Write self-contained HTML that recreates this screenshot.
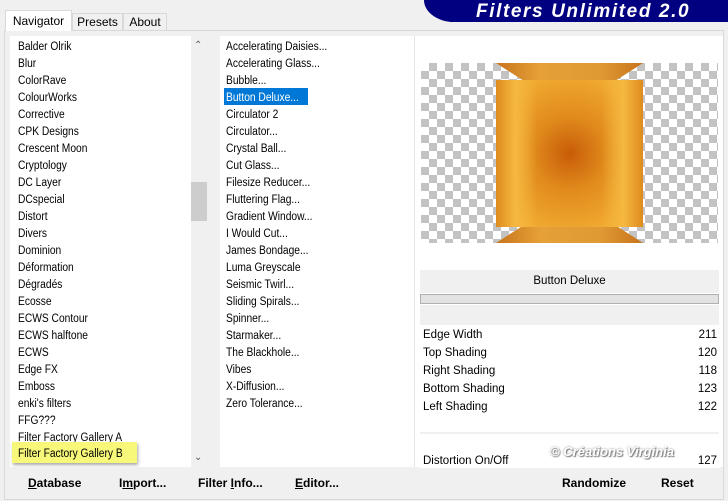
<!DOCTYPE html>
<html><head><style>
*{margin:0;padding:0;box-sizing:border-box}
body{width:728px;height:501px;background:#f0f0f0;font-family:"Liberation Sans",sans-serif;font-size:11.5px;color:#000;position:relative;overflow:hidden}
.a{position:absolute}
.row{position:absolute;height:17px;line-height:17px;white-space:nowrap;transform:scaleX(0.89);transform-origin:0 0}
.tab{position:absolute;border:1px solid #d9d9d9;border-bottom:none;background:#f0f0f0;font-size:12px;text-align:center}
.btn{position:absolute;font-weight:bold;font-size:12px}
.ck{background-color:#fff;background-image:linear-gradient(45deg,#c3c3c3 25%,transparent 25%,transparent 75%,#c3c3c3 75%),linear-gradient(45deg,#c3c3c3 25%,transparent 25%,transparent 75%,#c3c3c3 75%);background-size:16px 16px;background-position:0 0,8px 8px}
.sl{position:absolute;left:420px;width:299px;height:17px;background:#fff;line-height:17px;padding-left:3px}
.sl span{position:absolute;right:2px}
</style></head><body>
<div class="a" style="left:424px;top:0;width:304px;height:22px;background:#000080;border-bottom-left-radius:30px 22px"></div>
<div class="a" style="left:476px;top:0;height:22px;color:#fff;font-weight:bold;font-style:italic;font-size:19px;line-height:23px;letter-spacing:1.6px;white-space:nowrap">Filters Unlimited 2.0</div>
<div class="a" style="left:4px;top:30px;width:720px;height:470px;border:1px solid #d9d9d9;background:#f0f0f0"></div>
<div class="tab" style="left:5px;top:10px;width:67px;height:21px;background:#fff;line-height:20px">Navigator</div>
<div class="tab" style="left:72px;top:13px;width:51px;height:17px;line-height:16px">Presets</div>
<div class="tab" style="left:123px;top:13px;width:44px;height:17px;line-height:16px">About</div>
<div class="a" style="left:10px;top:36px;width:181px;height:431px;background:#fff"></div>
<div class="a" style="left:191px;top:36px;width:16px;height:431px;background:#f0f0f0"></div>
<div class="a" style="left:191px;top:182px;width:16px;height:39px;background:#cdcdcd"></div>
<div class="a" style="left:194px;top:40px;font-size:10px;color:#606060">&#8963;</div>
<div class="a" style="left:194px;top:452px;font-size:10px;color:#606060">&#8964;</div>
<div class="a" style="left:220px;top:36px;width:194px;height:431px;background:#fff"></div>
<div class="a" style="left:414px;top:36px;width:309px;height:431px;background:#fff;border-left:1px solid #e5e5e5"></div>
<div id="L"></div>
<div class="a" style="left:12px;top:442px;width:125px;height:21px;background:#f7f77a;box-shadow:1px 2px 3px rgba(0,0,0,.35)"></div>
<div class="row" style="left:18px;top:446px">Filter Factory Gallery B</div>
<div class="a" style="left:224px;top:88px;width:84px;height:17px;background:#0078d7"></div>
<div id="M"></div>
<div class="a ck" style="left:421px;top:63px;width:297px;height:180px"></div>
<div class="a" style="left:496px;top:63px;width:147px;height:17px;background:linear-gradient(90deg,#c8741c,#e6a038 30%,#e09a34 70%,#c8741c);clip-path:polygon(0 0,100% 0,82% 100%,18% 100%)"></div>
<div class="a" style="left:496px;top:226px;width:147px;height:17px;background:linear-gradient(90deg,#c8741c,#e6a038 30%,#e09a34 70%,#c8741c);clip-path:polygon(18% 0,82% 0,100% 100%,0 100%)"></div>
<div class="a" style="left:496px;top:80px;width:147px;height:147px;background:radial-gradient(ellipse at center,#c85c08 0%,#e08a1c 35%,#f0a830 75%,#f5b840 100%)"></div>
<div class="a" style="left:496px;top:80px;width:147px;height:147px;background:linear-gradient(90deg,#de8a1e,#f5b840 13%,transparent 28%,transparent 72%,#f5b840 87%,#de8a1e)"></div>
<div class="a" style="left:420px;top:270px;width:299px;height:23px;background:#f0f0f0;text-align:center;line-height:23px">Button Deluxe</div>
<div class="a" style="left:420px;top:294px;width:299px;height:10px;background:#e2e2e2;border:1px solid #b0b0b0"></div>
<div class="a" style="left:420px;top:305px;width:299px;height:20px;background:#f0f0f0"></div>
<div class="sl" style="top:325px;line-height:20px">Edge Width<span>211</span></div>
<div class="sl" style="top:343px;line-height:20px">Top Shading<span>120</span></div>
<div class="sl" style="top:361px;line-height:20px">Right Shading<span>118</span></div>
<div class="sl" style="top:379px;line-height:20px">Bottom Shading<span>123</span></div>
<div class="sl" style="top:397px;line-height:20px">Left Shading<span>122</span></div>
<div class="a" style="left:420px;top:432px;width:299px;height:2px;background:#f0f0f0"></div>
<div class="sl" style="top:451px;line-height:20px">Distortion On/Off<span>127</span></div>
<div class="a" style="left:550px;top:444px;font-weight:bold;font-style:italic;font-size:13px;color:#fff;text-shadow:0 0 2px #888,1px 1px 1px #777">© Créations Virginia</div>
<div class="a" style="left:420px;top:468px;width:299px;height:29px;background:#f0f0f0"></div>
<div class="btn" style="left:562px;top:476px">Randomize</div>
<div class="btn" style="left:661px;top:476px">Reset</div>
<div class="a" style="left:10px;top:467px;width:404px;height:30px;background:#f0f0f0"></div>
<div class="btn" style="left:28px;top:476px"><u>D</u>atabase</div>
<div class="btn" style="left:119px;top:476px">I<u>m</u>port...</div>
<div class="btn" style="left:198px;top:476px">Filter <u>I</u>nfo...</div>
<div class="btn" style="left:295px;top:476px"><u>E</u>ditor...</div>
<script>
var L=["Balder Olrik","Blur","ColorRave","ColourWorks","Corrective","CPK Designs","Crescent Moon","Cryptology","DC Layer","DCspecial","Distort","Divers","Dominion","Déformation","Dégradés","Ecosse","ECWS Contour","ECWS halftone","ECWS","Edge FX","Emboss","enki's filters","FFG???","Filter Factory Gallery A"];
var M=["Accelerating Daisies...","Accelerating Glass...","Bubble...","Button Deluxe...","Circulator 2","Circulator...","Crystal Ball...","Cut Glass...","Filesize Reducer...","Fluttering Flag...","Gradient Window...","I Would Cut...","James Bondage...","Luma Greyscale","Seismic Twirl...","Sliding Spirals...","Spinner...","Starmaker...","The Blackhole...","Vibes","X-Diffusion...","Zero Tolerance..."];
var h="";L.forEach(function(t,i){h+='<div class="row" style="left:18px;top:'+(39+i*17)+'px">'+t+'</div>'});
document.getElementById("L").innerHTML=h;h="";
M.forEach(function(t,i){h+='<div class="row" style="left:226px;top:'+(39+i*17)+'px;'+(i==3?'color:#fff':'')+'">'+t+'</div>'});
document.getElementById("M").innerHTML=h;
</script>
</body></html>
